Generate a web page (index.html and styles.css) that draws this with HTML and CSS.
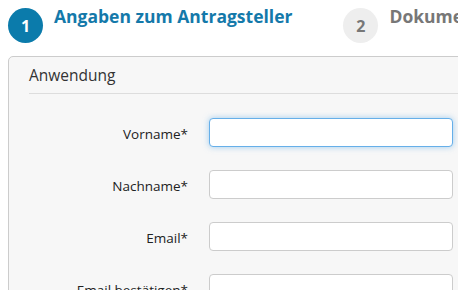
FILE: index.html
```html
<!doctype html>
<html lang="de">

<head>
	<meta charset="UTF-8">
	<title>Antrag</title>
	<link rel="stylesheet" href="styles.css">
</head>

<body>
	<div class="steps">
		<div class="step active">
			<span class="num">1</span>
			<span class="title">Angaben zum Antragsteller</span>
		</div>
		<div class="step">
			<span class="num">2</span>
			<span class="title">Dokumente</span>
		</div>
	</div>
	<div class="panel">
		<h3 class="legend">Anwendung</h3>
		<form class="form">
			<label class="row">
				<span class="label">Vorname*</span>
				<input class="field focus" type="text">
			</label>
			<label class="row">
				<span class="label">Nachname*</span>
				<input class="field" type="text">
			</label>
			<label class="row">
				<span class="label">Email*</span>
				<input class="field" type="text">
			</label>
			<label class="row">
				<span class="label">Email bestätigen*</span>
				<input class="field" type="text">
			</label>
		</form>
	</div>
</body>

</html>
```

FILE: styles.css
```css
* {
	padding: 0;
	margin: 0;
	box-sizing: border-box;
}

html,
body {
	width: 458px;
	height: 290px;
	overflow: hidden;
}

body {
	background: #fff;
	font-family: 'Open Sans', 'DejaVu Sans', sans-serif;
	color: #333;
}

.steps {
	display: flex;
	width: 700px;
	padding: 8px 0 0 8px;
	gap: 51px;
}

.step {
	display: flex;
	align-items: flex-start;
	gap: 11px;
}

.step .num {
	width: 35px;
	height: 35px;
	border-radius: 50%;
	background: #eee;
	color: #777;
	font-weight: bold;
	font-size: 16px;
	display: flex;
	align-items: center;
	justify-content: center;
}

.step .title {
	font-size: 17.5px;
	font-weight: bold;
	color: #777;
	line-height: 17px;
	white-space: nowrap;
}

.step.active .num {
	background: #0b7bab;
	color: #fff;
}

.step.active .title {
	color: #1479aa;
}

.panel {
	width: 600px;
	margin: 13px 0 0 8px;
	border: 1px solid #ccc;
	border-radius: 5px;
	background: #f7f7f7;
	padding: 8px 20px 0;
	height: 400px;
}

.legend {
	font-size: 15.5px;
	font-weight: normal;
	color: #333;
	line-height: 20px;
	padding-bottom: 8px;
	border-bottom: 1px solid #ddd;
}

.form {
	padding-top: 24px;
	display: flex;
	flex-direction: column;
	gap: 23px;
}

.row {
	display: flex;
	align-items: center;
	gap: 21px;
}

.row .label {
	width: 159px;
	text-align: right;
	font-size: 13.5px;
	color: #222;
	padding-top: 2px;
}

.field {
	width: 244px;
	height: 29px;
	border: 1px solid #ccc;
	border-radius: 4px;
	background: #fff;
	outline: none;
}

.field.focus {
	border-color: #66afe9;
	box-shadow: 0 0 6px rgba(102, 175, 233, 0.6);
}
```
